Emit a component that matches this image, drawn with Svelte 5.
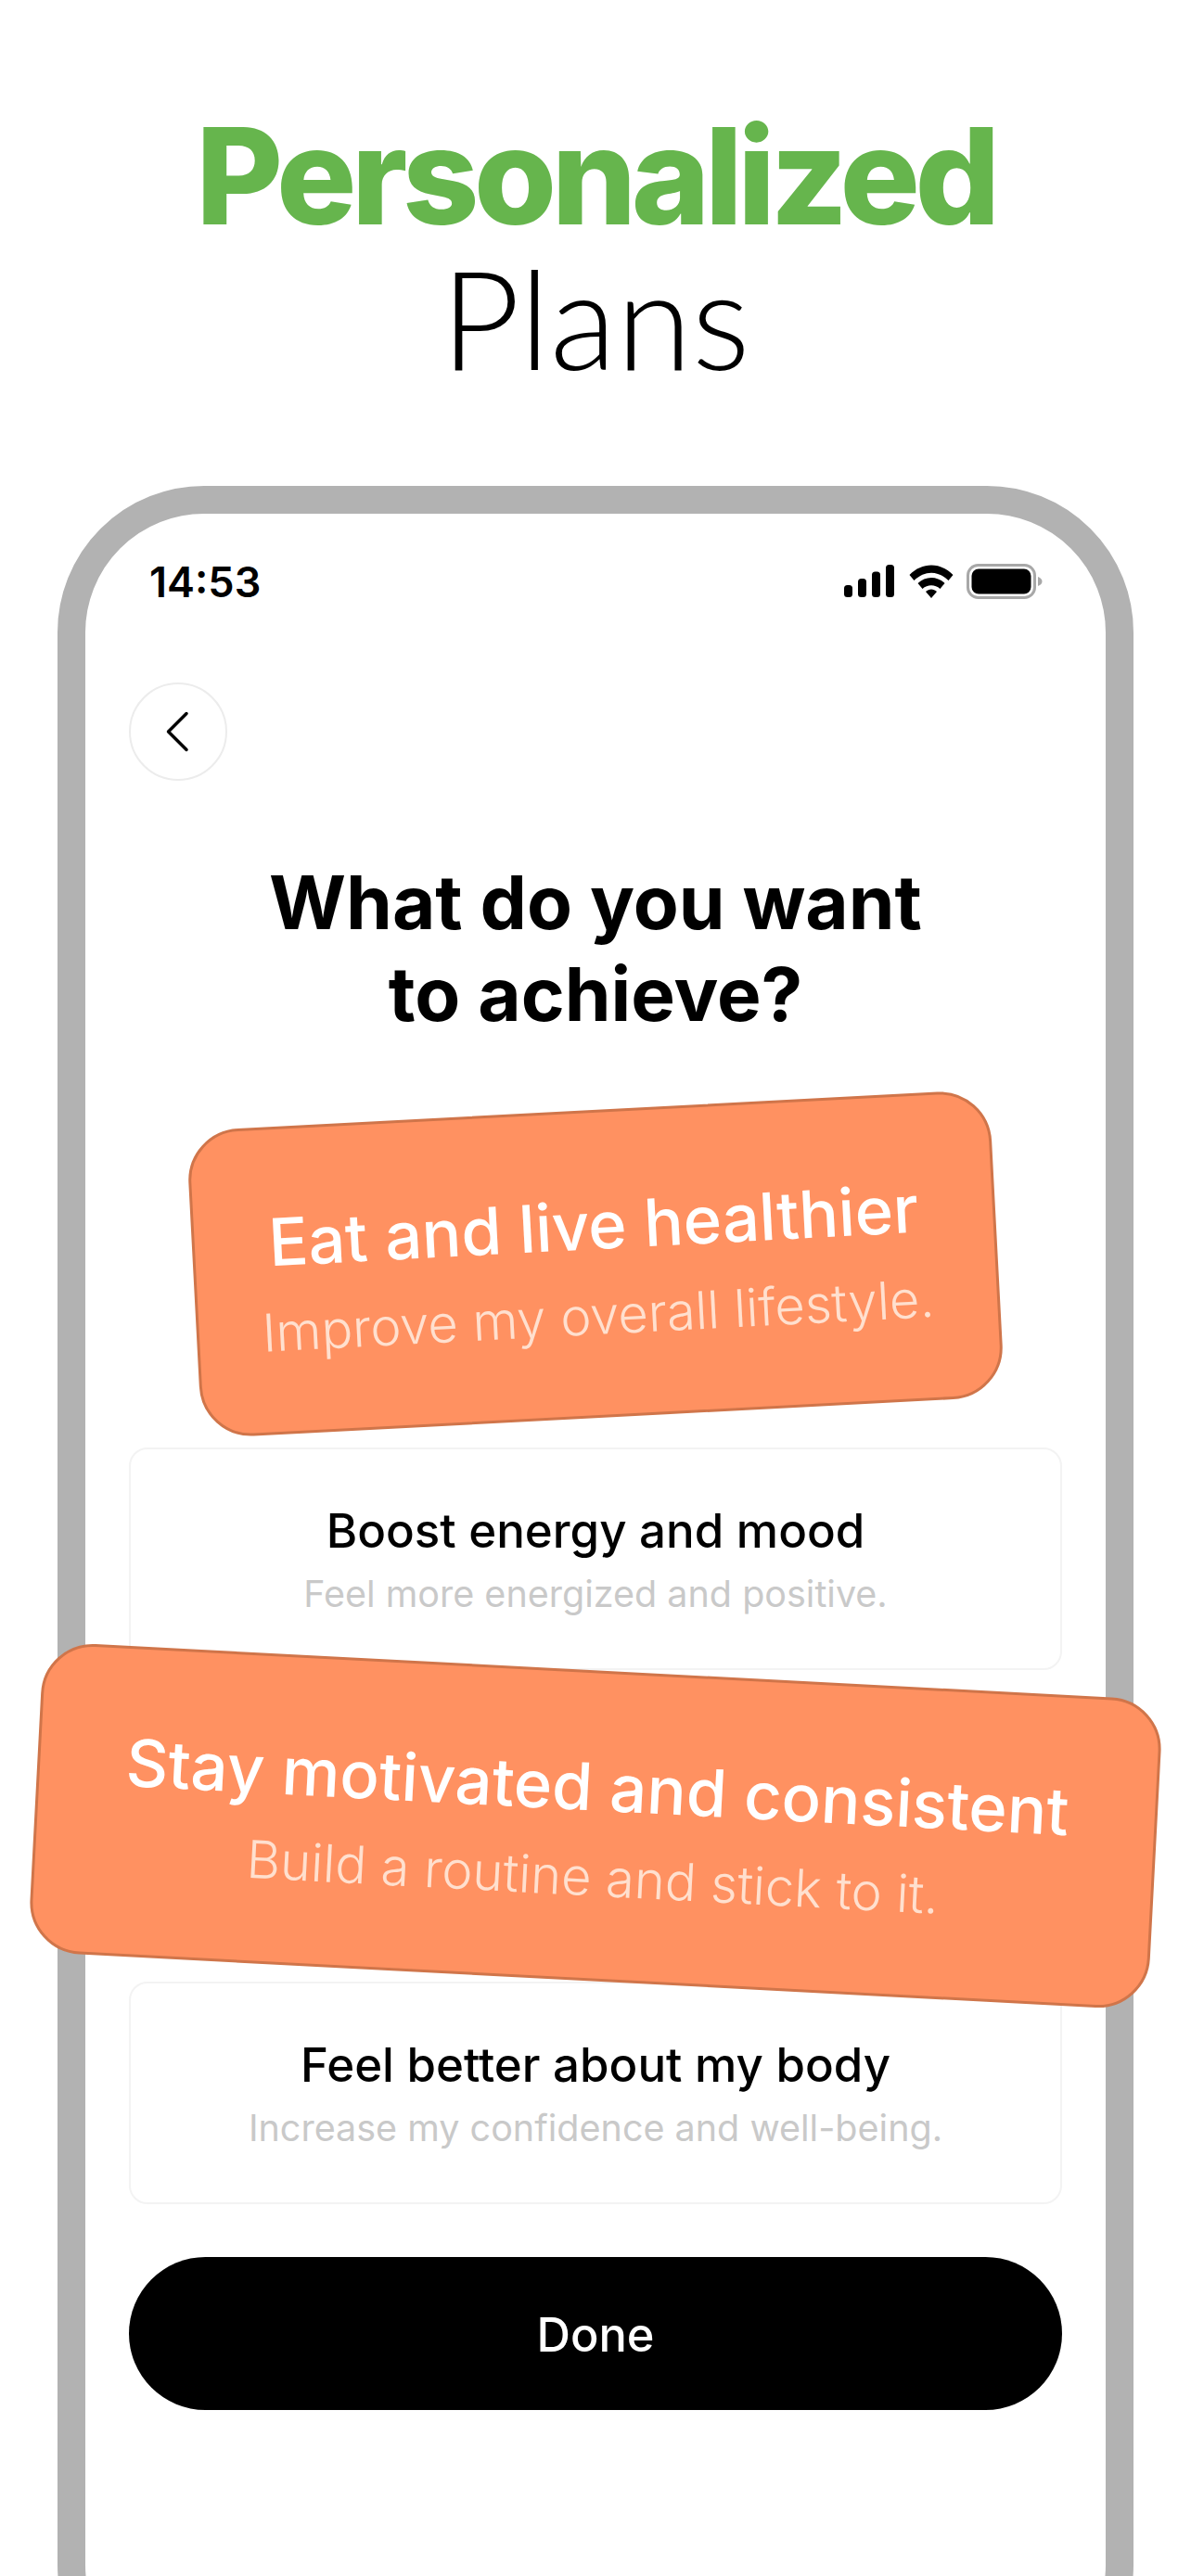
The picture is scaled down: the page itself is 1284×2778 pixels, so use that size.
<script>
  const cards = [
    { title: 'Eat and live healthier', sub: 'Improve my overall lifestyle.', pop: 'up' },
    { title: 'Boost energy and mood', sub: 'Feel more energized and positive.' },
    { title: 'Stay motivated and consistent', sub: 'Build a routine and stick to it.', pop: 'down' },
    { title: 'Feel better about my body', sub: 'Increase my confidence and well-being.' }
  ];
</script>

<div class="page">
  <h1 class="headline"><strong>Personalized</strong><span>Plans</span></h1>

  <div class="phone">
    <div class="status">
      <span class="time">14:53</span>
      <div class="status-icons">
        <svg width="56" height="36" viewBox="0 0 56 36" class="signal" aria-hidden="true">
          <rect x="0" y="22" width="9" height="13" rx="3.5" />
          <rect x="15" y="15" width="9" height="20" rx="3.5" />
          <rect x="30" y="7.500" width="9" height="27.500" rx="3.500" />
          <rect x="45" y="0" width="9" height="35" rx="3.500" />
        </svg>
        <svg width="48" height="36" viewBox="0 0 48 36" aria-hidden="true">
          <path d="M0.500 11 C14 -3 34 -3 47.500 11 L42.500 17 C31 6 17 6 5.500 17 Z" />
          <path d="M9.500 20 C17.500 12 30.500 12 38.500 20 L33.500 26 C28 21 20 21 14.500 26 Z" />
          <path d="M18 29 C21.500 25.500 26.500 25.500 30 29 L24 36 Z" />
        </svg>
        <svg width="82" height="38" viewBox="0 0 82 38" aria-hidden="true">
          <rect x="1.500" y="1.500" width="72" height="35" rx="11" fill="none" stroke="#a8a8a8" stroke-width="3" />
          <rect x="5.500" y="5.500" width="64" height="27" rx="7.500" />
          <path d="M77 14 C80 15 81.500 17 81.500 19 C81.500 21 80 23 77 24 Z" fill="#a8a8a8" />
        </svg>
      </div>
    </div>

    <div class="content">
      <button class="back" aria-label="Back">
        <svg width="26" height="44" viewBox="0 0 26 44" fill="none" stroke="#000" stroke-width="3.500" stroke-linecap="round" stroke-linejoin="round">
          <path d="M23 2.500 L3.500 22 L23 41.500" />
        </svg>
      </button>

      <h2 class="question">What do you want<br />to achieve?</h2>

      <div class="options">
        {#each cards as card}
          <div class="slot">
            <div class="card" class:pop-up={card.pop === 'up'} class:pop-down={card.pop === 'down'}>
              <div class="card-title">{card.title}</div>
              <div class="card-sub">{card.sub}</div>
            </div>
          </div>
        {/each}
      </div>

      <button class="done">Done</button>
    </div>
  </div>
</div>

<style>
  :global(body) {
    margin: 0;
    background: #fff;
  }

  .page {
    position: relative;
    height: 2778px;
    overflow: hidden;
    background: #fff;
    font-family: Inter, "Noto Sans", sans-serif;
    color: #000;
  }

  .headline {
    margin: 0;
    padding-top: 114px;
    height: 524px;
    box-sizing: border-box;
    display: flex;
    flex-direction: column;
    align-items: center;
    font-weight: 400;
    font-size: 144px;
    line-height: 152px;
  }

  .headline strong {
    color: #66b54d;
    font-weight: 800;
    letter-spacing: -5.500px;
  }

  .headline span {
    font-family: Lato, Inter, sans-serif;
    font-size: 148px;
    font-weight: 300;
  }

  .phone {
    margin: 0 62px;
    height: 2400px;
    box-sizing: border-box;
    border: 30px solid #b2b2b2;
    border-radius: 158px;
    background: #fff;
  }

  .status {
    display: flex;
    align-items: center;
    justify-content: space-between;
    height: 90px;
    padding: 28px 68px 0 69px;
  }

  .time {
    font-size: 45px;
    font-weight: 600;
  }

  .status-icons {
    display: flex;
    align-items: center;
    gap: 14px;
  }

  .status-icons svg {
    display: block;
    fill: #000;
  }

  .content {
    padding: 64px 47px 0;
  }

  .back {
    display: flex;
    align-items: center;
    justify-content: center;
    width: 106px;
    height: 106px;
    padding: 0;
    border: 2px solid #ececec;
    border-radius: 50%;
    background: #fff;
  }

  .back svg {
    display: block;
    margin-right: 3px;
  }

  .question {
    margin: 81px 0 0;
    text-align: center;
    font-size: 80px;
    font-weight: 700;
    line-height: 99px;
  }

  .options {
    display: flex;
    flex-direction: column;
    gap: 48px;
    margin-top: 152px;
  }

  .slot {
    position: relative;
    height: 240px;
  }

  .card {
    box-sizing: border-box;
    height: 100%;
    display: flex;
    flex-direction: column;
    align-items: center;
    justify-content: center;
    gap: 14px;
    border: 2px solid #f3f3f3;
    border-radius: 20px;
    background: #fff;
  }

  .card-title {
    font-size: 51px;
    font-weight: 500;
    line-height: 62px;
  }

  .card-sub {
    font-size: 39.500px;
    line-height: 46px;
    color: #c9c9c9;
  }

  .card.pop-up,
  .card.pop-down {
    position: absolute;
    left: 50%;
    top: 50%;
    z-index: 2;
    padding-top: 6px;
    border: 3px solid #d0754a;
    border-radius: 56px;
    background: #ff9161;
    gap: 25px;
  }

  .card.pop-up {
    width: 867px;
    height: 332px;
    top: calc(50% - 30px);
    transform: translate(-50%, -50%) rotate(-3deg);
  }

  .card.pop-down {
    width: 1209px;
    height: 335px;
    transform: translate(-50%, -50%) rotate(3deg);
  }

  .pop-up .card-title,
  .pop-down .card-title {
    font-size: 70.500px;
    line-height: 80px;
    color: #fff;
  }

  .pop-up .card-sub,
  .pop-down .card-sub {
    font-size: 56px;
    line-height: 64px;
    font-weight: 300;
    color: #ffe0cf;
  }

  .done {
    display: block;
    width: 100%;
    height: 165px;
    margin-top: 57px;
    padding-top: 2px;
    border: 0;
    border-radius: 83px;
    background: #000;
    color: #fff;
    font-family: inherit;
    font-size: 50.500px;
    font-weight: 500;
  }
</style>
